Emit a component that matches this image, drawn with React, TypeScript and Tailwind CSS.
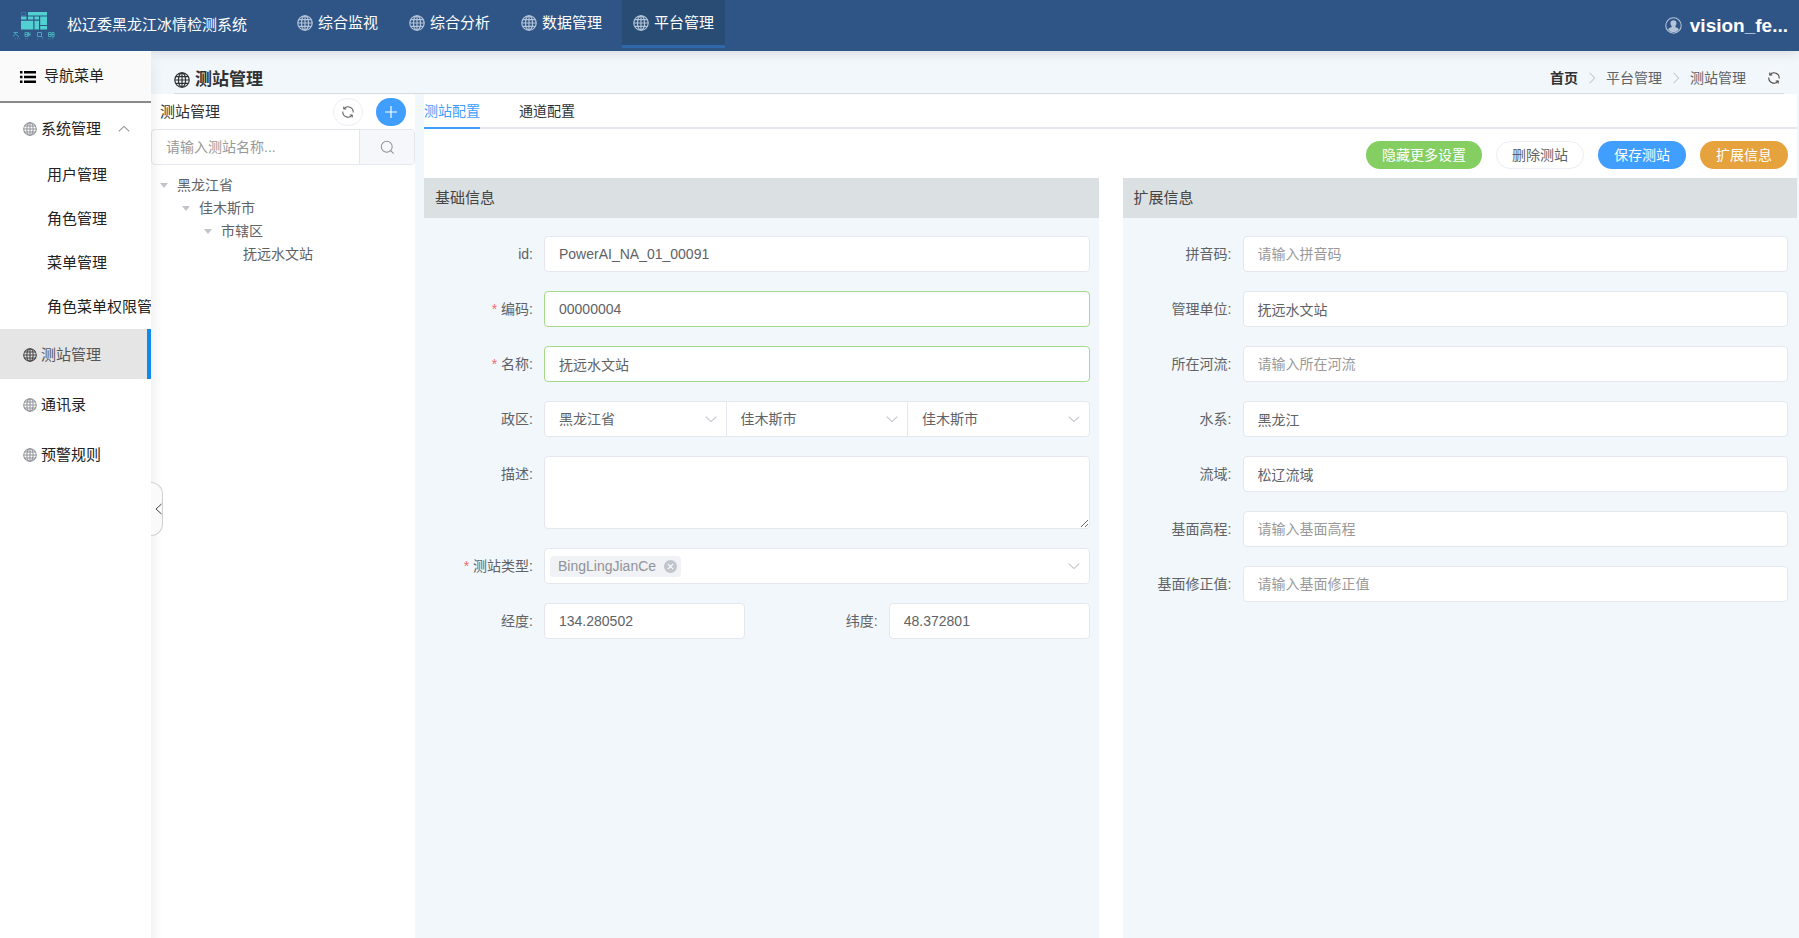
import { useState } from "react";

type IconProps = { className?: string };

function GlobeIcon({ className }: IconProps) {
  return (
    <svg viewBox="0 0 16 16" className={className} fill="none" stroke="currentColor" strokeWidth="1.2" aria-hidden="true">
      <circle cx="8" cy="8" r="7.2" />
      <ellipse cx="8" cy="8" rx="3.6" ry="7.2" />
      <path d="M8 .8v14.4M.8 8h14.4M1.8 4.6h12.4M1.8 11.4h12.4" />
    </svg>
  );
}

function RefreshIcon({ className }: IconProps) {
  return (
    <svg viewBox="0 0 16 16" className={className} fill="none" stroke="currentColor" strokeWidth="1.2" aria-hidden="true">
      <path d="M3.4 4.4A5.900 5.900 0 0 1 13.900 8.600M12.600 11.600A5.900 5.900 0 0 1 2.100 7.400" />
      <path d="M3.2 1.800v2.800H6M12.800 14.200v-2.800H10" />
    </svg>
  );
}

function ChevronIcon({ className }: IconProps) {
  return (
    <svg viewBox="0 0 16 16" className={className} fill="none" stroke="currentColor" strokeWidth="1.2" aria-hidden="true">
      <path d="M2 5.200 8 11l6-5.800" />
    </svg>
  );
}

function SearchIcon({ className }: IconProps) {
  return (
    <svg viewBox="0 0 16 16" className={className} fill="none" stroke="currentColor" strokeWidth="1.1" aria-hidden="true">
      <circle cx="7.2" cy="7.2" r="5.8" />
      <path d="m11.4 11.4 3.2 3.2" />
    </svg>
  );
}

function ListIcon({ className }: IconProps) {
  return (
    <svg viewBox="0 0 16 14" className={className} fill="currentColor" aria-hidden="true">
      <path d="M0 1h2.500v2.500H0zM0 5.700h2.500v2.500H0zM0 10.400h2.500v2.500H0zM4 1h12v2.500H4zM4 5.700h12v2.500H4zM4 10.400h12v2.500H4z" />
    </svg>
  );
}

function UserIcon({ className }: IconProps) {
  return (
    <svg viewBox="0 0 18 18" className={className} aria-hidden="true">
      <circle cx="9" cy="9" r="8.2" fill="none" stroke="currentColor" strokeWidth="1.1" />
      <path
        fill="currentColor"
        d="M9 3.400c2 0 3.200 1.400 3.200 3.200 0 1.300-.6 2.300-1.200 2.900v1.200l2.800 1.300c.5.300.7.800.7 1.500A7.200 7.200 0 0 1 9 16.200a7.200 7.200 0 0 1-5.500-2.700c0-.7.200-1.200.7-1.500L7 10.700V9.500c-.7-.6-1.200-1.600-1.200-2.900C5.800 4.800 7 3.400 9 3.400z"
      />
    </svg>
  );
}

function Logo() {
  return (
    <svg viewBox="0 0 42 29" className="h-[29px] w-[42px] text-[#52cfd0]" fill="currentColor" aria-hidden="true">
      <path d="M15 1h19v3.600H15zM8 5.600h5.500v3H8zM15 5.600h5.300v3H15zM8 9.800h12.300V18.500H8zM21.500 5.600h4.500v3h-4.500zM21.500 9.800h4.500v8.700h-4.500zM27.200 5.600H34V14h-6.800zM27.200 15H34v3.500h-6.800z" />
      <path d="M8.500 1.500h4v3h-4z" fill="none" stroke="currentColor" strokeWidth=".5" opacity=".5" />
      <g fill="none" stroke="currentColor" strokeWidth=".9" opacity=".75">
        <path d="M.5 21.500h4.500M3 21.500l-2.500 4M2.500 23l3.500 3M12 21.500h2.500v4H12zM15.500 21v4.500M12 23.500h5M17 21.500v3.500M24.500 21.500h4v4h-4zM28 25l1.500 1.500M35.500 21.500H38v4h-2.500zM35.500 23.500h6M39 21.500h2v4.500h-2z" />
        <path d="M2 27.800h6M12 27.800h4M24 27.800h1M29 27.800h1M35 27.800h6" strokeDasharray="1 1" opacity=".6" />
      </g>
    </svg>
  );
}

const navItems = ["综合监视", "综合分析", "数据管理", "平台管理"];
const subMenus = ["用户管理", "角色管理", "菜单管理", "角色菜单权限管理"];
const sideItems = ["测站管理", "通讯录", "预警规则"];

const treeNodes = [
  { label: "黑龙江省", indent: "pl-[9px]", leaf: false },
  { label: "佳木斯市", indent: "pl-[31px]", leaf: false },
  { label: "市辖区", indent: "pl-[53px]", leaf: false },
  { label: "抚远水文站", indent: "pl-[75px]", leaf: true },
];

const extendFields = [
  { id: "pinyin", label: "拼音码", value: "" },
  { id: "unit", label: "管理单位", value: "抚远水文站" },
  { id: "river", label: "所在河流", value: "" },
  { id: "waterSystem", label: "水系", value: "黑龙江" },
  { id: "basin", label: "流域", value: "松辽流域" },
  { id: "elevation", label: "基面高程", value: "" },
  { id: "correction", label: "基面修正值", value: "" },
];

const regions = ["黑龙江省", "佳木斯市", "佳木斯市"];

function Header() {
  const [active, setActive] = useState("平台管理");

  return (
    <header className="relative z-10 flex h-[51px] shrink-0 items-center bg-[#2f5587] text-white shadow-[0_2px_12px_rgba(0,0,0,0.12)]">
      <div className="flex w-[286px] shrink-0 items-center gap-3 pl-[13px]">
        <Logo />
        <h1 className="text-[15px]">松辽委黑龙江冰情检测系统</h1>
      </div>
      <nav className="flex h-full gap-[9px]">
        {navItems.map((item) => (
          <button
            key={item}
            type="button"
            onClick={() => setActive(item)}
            className={`flex h-12 items-center gap-[5px] border-b-3 px-[11px] pt-px text-[15px] ${
              item === active ? "border-[#2e68a9] bg-[#294c75]" : "border-transparent"
            }`}
          >
            <GlobeIcon className="size-4 text-[#b4c3d8]" />
            {item}
          </button>
        ))}
      </nav>
      <button type="button" className="ml-auto flex items-center gap-2 pr-[11px] text-[19px] leading-6 font-bold">
        <UserIcon className="size-[17px] text-[#b4c3d8]" />
        vision_fe...
      </button>
    </header>
  );
}

function Sidebar() {
  const [open, setOpen] = useState(true);
  const [active, setActive] = useState("测站管理");

  return (
    <aside className="relative z-10 w-[151px] shrink-0 bg-white text-[15px] text-[#222] shadow-[2px_12px_12px_rgba(0,0,0,0.08)]">
      <div className="flex h-[52px] items-center gap-2 border-b-2 border-[#8a8a8a] bg-[#fafafa] pt-px pl-5">
        <ListIcon className="h-[14px] w-4 text-black" />
        导航菜单
      </div>
      <button type="button" onClick={() => setOpen(!open)} className="flex h-[50px] w-full items-center gap-1 pt-[2px] pl-[23px]">
        <GlobeIcon className="size-[14px] text-[#909399]" />
        系统管理
        <ChevronIcon className={`ml-3 size-[14px] text-[#909399] ${open ? "rotate-180" : ""}`} />
      </button>
      {open && (
        <ul className="overflow-hidden">
          {subMenus.map((item) => (
            <li key={item}>
              <a href="#" className="flex h-11 items-center pt-px pl-[47px] whitespace-nowrap">
                {item}
              </a>
            </li>
          ))}
        </ul>
      )}
      {sideItems.map((item) => (
        <button
          key={item}
          type="button"
          onClick={() => setActive(item)}
          className={`flex h-[50px] w-full items-center gap-1 border-r-4 pt-[2px] pl-[23px] ${
            item === active ? "border-[#0f8bee] bg-[#e5e5e5] text-[#555]" : "border-transparent"
          }`}
        >
          <GlobeIcon className={`size-[14px] ${item === active ? "text-[#444]" : "text-[#909399]"}`} />
          {item}
        </button>
      ))}
      {/* collapse handle, hangs over the edge of the sidebar */}
      <button
        type="button"
        aria-label="收起菜单"
        className="absolute top-[431px] left-full flex h-[54px] w-3 items-center justify-end rounded-r-xl border border-l-0 border-[#d0d0d0] bg-[#fafafa]"
      >
        <svg viewBox="0 0 7 12" className="h-3 w-[7px]" fill="none" stroke="#444" aria-hidden="true">
          <path d="M6.500 1 1 6l5.500 5" />
        </svg>
      </button>
    </aside>
  );
}

function StationTree() {
  return (
    <section className="w-[264px] shrink-0 bg-white">
      <div className="flex h-[35px] items-center pr-[9px] pl-[9px]">
        <h3 className="pt-px text-[15px] text-[#303133]">测站管理</h3>
        <button
          type="button"
          aria-label="刷新"
          className="ml-auto flex h-7 w-[30px] items-center justify-center rounded-full border border-[#ebeef5] text-[#606266]"
        >
          <RefreshIcon className="size-[14px]" />
        </button>
        <button
          type="button"
          aria-label="新增"
          className="ml-[13px] flex h-7 w-[30px] items-center justify-center rounded-full bg-[#409eff] text-white"
        >
          <svg viewBox="0 0 14 14" className="size-[14px]" fill="none" stroke="currentColor" strokeWidth="1.2" aria-hidden="true">
            <path d="M7 1v12M1 7h12" />
          </svg>
        </button>
      </div>
      <div className="flex h-9 overflow-hidden rounded border border-[#e4e7ed]">
        <input
          type="text"
          aria-label="测站名称"
          placeholder="请输入测站名称..."
          className="min-w-0 flex-1 px-[14px] text-[14px] outline-none placeholder:text-[#999]"
        />
        <button
          type="button"
          aria-label="搜索"
          className="flex w-[55px] items-center justify-center border-l border-[#e4e7ed] bg-[#f5f7fa] text-[#909399]"
        >
          <SearchIcon className="size-[15px]" />
        </button>
      </div>
      <ul className="pt-[9px] text-[14px] text-[#606266]">
        {treeNodes.map((node) => (
          <li key={node.label} className={`flex h-[23px] items-center ${node.indent}`}>
            <span
              className={`mr-[9px] border-x-4 border-t-5 border-x-transparent ${
                node.leaf ? "border-t-transparent" : "border-t-[#c0c4cc]"
              }`}
            />
            {node.label}
          </li>
        ))}
      </ul>
    </section>
  );
}

const inputClass = "block h-9 w-full min-w-0 rounded border bg-white px-[14px] pb-px outline-none placeholder:text-[#999]";

type FieldProps = {
  id: string;
  label: string;
  required?: boolean;
  children: React.ReactNode;
};

function Field({ id, label, required, children }: FieldProps) {
  return (
    <div className="flex min-w-0">
      <label htmlFor={id} className="w-[120px] shrink-0 pr-[11px] text-right leading-9">
        {required && <span className="mr-1 text-[#f56c6c]">*</span>}
        {label}:
      </label>
      <div className="min-w-0 flex-1">{children}</div>
    </div>
  );
}

type TextInputProps = {
  id: string;
  value: string;
  valid?: boolean;
  placeholder?: string;
};

function TextInput({ id, value, valid, placeholder }: TextInputProps) {
  return (
    <input
      id={id}
      type="text"
      defaultValue={value}
      placeholder={placeholder}
      className={`${inputClass} ${valid ? "border-[#a4da89]" : "border-[#e4e7ed]"}`}
    />
  );
}

function Panel({ title, children }: { title: string; children: React.ReactNode }) {
  return (
    <section className="min-w-0 flex-1 bg-[#f1f7fa]">
      <h3 className="flex h-10 items-center bg-[#dbe0e2] pt-px pl-[11px] text-[15px] text-[#444]">{title}</h3>
      <div className="flex flex-col gap-[19px] pt-[18px] pr-[9px] text-[14px] text-[#606266]">{children}</div>
    </section>
  );
}

function BasicForm() {
  const [tags, setTags] = useState(["BingLingJianCe"]);

  return (
    <Panel title="基础信息">
      <Field id="stationId" label="id">
        <TextInput id="stationId" value="PowerAI_NA_01_00091" />
      </Field>
      <Field id="code" label="编码" required>
        <TextInput id="code" value="00000004" valid />
      </Field>
      <Field id="name" label="名称" required>
        <TextInput id="name" value="抚远水文站" valid />
      </Field>
      <Field id="region0" label="政区">
        <div className="flex h-9 divide-x divide-[#e4e7ed] rounded border border-[#e4e7ed] bg-white">
          {regions.map((region, index) => (
            <div key={index} className="relative min-w-0 flex-1">
              <select
                id={`region${index}`}
                aria-label="政区"
                className="h-full w-full appearance-none bg-transparent px-[14px] outline-none"
              >
                <option>{region}</option>
              </select>
              <ChevronIcon className="pointer-events-none absolute top-[10px] right-2 size-[14px] text-[#c0c4cc]" />
            </div>
          ))}
        </div>
      </Field>
      <Field id="description" label="描述">
        <textarea
          id="description"
          className="block h-[73px] w-full rounded border border-[#e4e7ed] bg-white px-[14px] py-1 outline-none"
        />
      </Field>
      <Field id="stationType" label="测站类型" required>
        <div className="flex h-9 items-center rounded border border-[#e4e7ed] bg-white pr-2 pl-[5px]">
          {tags.map((tag) => (
            <span key={tag} className="flex h-[21px] items-center gap-2 rounded bg-[#f0f2f5] pr-1 pl-2 text-[#909399]">
              {tag}
              <button type="button" aria-label="移除" onClick={() => setTags(tags.filter((t) => t !== tag))}>
                <svg viewBox="0 0 12 12" className="block size-[13px]" aria-hidden="true">
                  <circle cx="6" cy="6" r="6" fill="#c0c4cc" />
                  <path d="m3.500 3.500 5 5m0-5-5 5" stroke="#fff" fill="none" />
                </svg>
              </button>
            </span>
          ))}
          <input id="stationType" type="text" className="min-w-0 flex-1 px-2 outline-none" />
          <ChevronIcon className="size-[14px] text-[#c0c4cc]" />
        </div>
      </Field>
      <div className="grid grid-cols-2 gap-6">
        <Field id="longitude" label="经度">
          <TextInput id="longitude" value="134.280502" />
        </Field>
        <Field id="latitude" label="纬度">
          <TextInput id="latitude" value="48.372801" />
        </Field>
      </div>
    </Panel>
  );
}

function ExtendForm() {
  return (
    <Panel title="扩展信息">
      {extendFields.map((field) => (
        <Field key={field.id} id={field.id} label={field.label}>
          <TextInput id={field.id} value={field.value} placeholder={`请输入${field.label}`} />
        </Field>
      ))}
    </Panel>
  );
}

function PageTitle() {
  return (
    <div className="mr-[15px] ml-[23px] flex h-[43px] items-end border-b border-[#d5dade]">
      <h2 className="flex items-center gap-[5px] text-[17px] leading-[26px] font-bold text-[#303133]">
        <GlobeIcon className="size-4" />
        测站管理
      </h2>
      <nav aria-label="面包屑" className="ml-auto flex items-center pb-[2px] text-[14px] leading-[26px] text-[#606266]">
        <a href="#" className="font-bold text-[#303133]">
          首页
        </a>
        <ChevronIcon className="mx-[7px] size-[14px] -rotate-90 text-[#c0c4cc]" />
        <a href="#">平台管理</a>
        <ChevronIcon className="mx-[7px] size-[14px] -rotate-90 text-[#c0c4cc]" />
        <span>测站管理</span>
        <button
          type="button"
          aria-label="刷新页面"
          className="ml-[18px] flex size-5 items-center justify-center rounded-full bg-[#f5f7fa] text-[#444]"
        >
          <RefreshIcon className="size-[14px]" />
        </button>
      </nav>
    </div>
  );
}

export default function App() {
  const [tab, setTab] = useState("测站配置");

  return (
    <div className="flex h-screen flex-col overflow-hidden bg-[#f1f7fa] font-['Liberation_Sans','Noto_Sans_CJK_SC',sans-serif]">
      <Header />
      <div className="flex min-h-0 flex-1">
        <Sidebar />
        <main className="flex min-w-0 flex-1 flex-col">
          <PageTitle />
          <div className="flex min-h-0 flex-1 gap-[9px] pr-[2px]">
            <StationTree />
            <section className="flex min-w-0 flex-1 flex-col bg-white">
              <div role="tablist" className="flex h-[35px] shrink-0 gap-[39px] border-b-2 border-[#e4e7ed] text-[14px]">
                {["测站配置", "通道配置"].map((item) => (
                  <button
                    key={item}
                    type="button"
                    role="tab"
                    aria-selected={item === tab}
                    onClick={() => setTab(item)}
                    className={`-mb-[2px] border-b-2 pt-[2px] ${
                      item === tab ? "border-[#409eff] text-[#409eff]" : "border-transparent text-[#303133]"
                    }`}
                  >
                    {item}
                  </button>
                ))}
              </div>
              <div className="flex h-[49px] shrink-0 items-center justify-end gap-[14px] pt-[3px] pr-[9px] text-[14px]">
                <button type="button" className="h-7 rounded-full bg-[#85ce61] px-4 text-white">
                  隐藏更多设置
                </button>
                <button type="button" className="h-7 rounded-full border border-[#ebeef5] bg-white px-[15px] text-[#606266]">
                  删除测站
                </button>
                <button type="button" className="h-7 rounded-full bg-[#409eff] px-4 text-white">
                  保存测站
                </button>
                <button type="button" className="h-7 rounded-full bg-[#e6a23c] px-4 text-white">
                  扩展信息
                </button>
              </div>
              <div className="flex min-h-0 flex-1 gap-6">
                <BasicForm />
                <ExtendForm />
              </div>
            </section>
          </div>
        </main>
      </div>
    </div>
  );
}
